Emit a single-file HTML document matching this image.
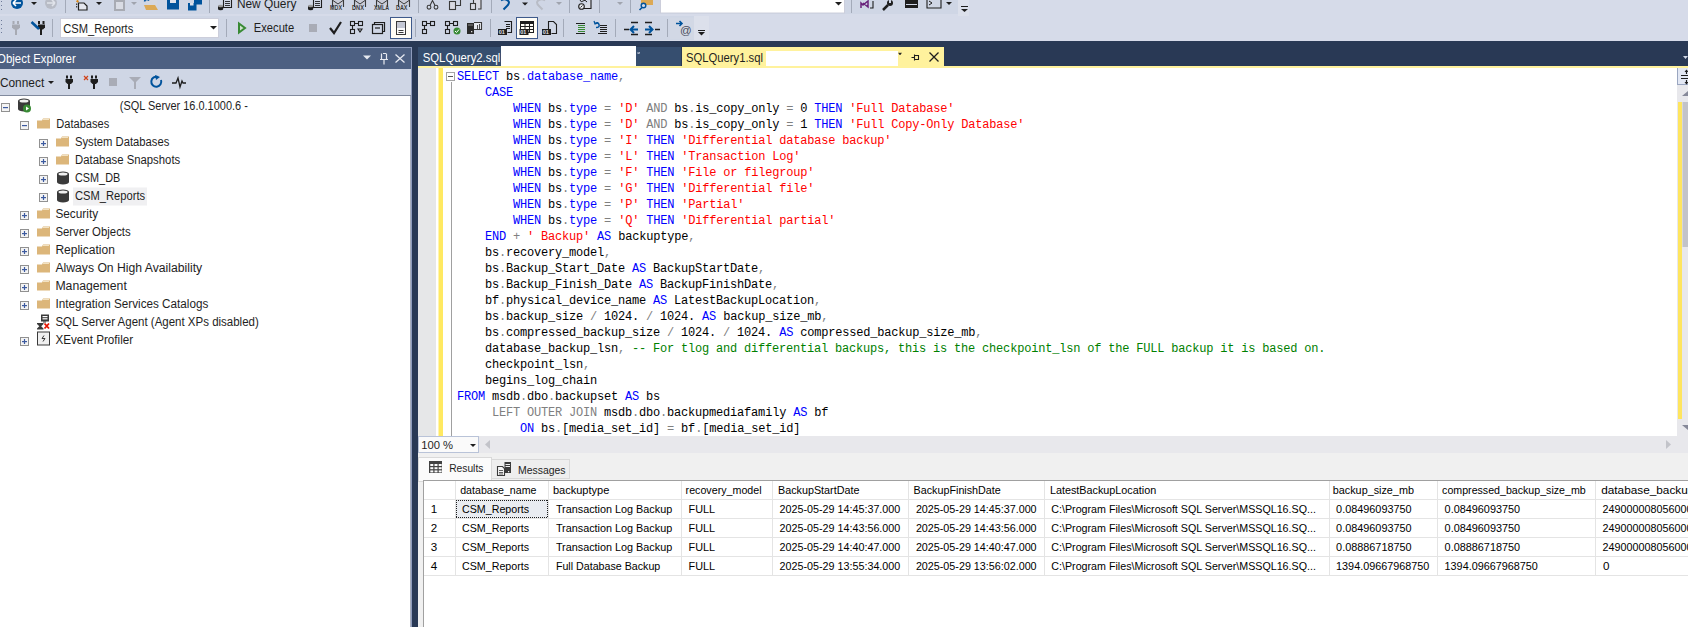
<!DOCTYPE html>
<html><head><meta charset="utf-8">
<style>
*{margin:0;padding:0;box-sizing:border-box}
html,body{width:1688px;height:627px;overflow:hidden;background:#293955;font-family:"Liberation Sans",sans-serif;position:relative}
.a{position:absolute;display:block}
svg text{white-space:pre}
#code{left:457px;top:69px;font-family:"Liberation Mono",monospace;font-size:12px;letter-spacing:-0.2px;line-height:16px;white-space:pre;color:#000}
.k{color:#0000FF}.g{color:#808080}.s{color:#FF0000}.c{color:#008000}.m{color:#FF00FF}
</style></head><body>
<svg class="a" style="left:0;top:0" width="1688" height="41" viewBox="0 0 1688 41">
<rect x="0" y="0" width="1688" height="41" fill="#D6DBE9"/>
<rect x="0" y="0" width="958" height="14" fill="#CFD6E5"/>
<rect x="0" y="16" width="694" height="24" fill="#CFD6E5"/><rect x="694" y="16" width="15" height="24" fill="#DCE0EB"/><rect x="958" y="0" width="11" height="16" fill="#DCE0EB"/>
<!-- grips -->
<g fill="#6D7A99"><rect x="1" y="1" width="1" height="1"/><rect x="1" y="5" width="1" height="1"/><rect x="1" y="9" width="1" height="1"/>
<rect x="1" y="20" width="1" height="1"/><rect x="1" y="24" width="1" height="1"/><rect x="1" y="28" width="1" height="1"/><rect x="1" y="32" width="1" height="1"/></g>
<!-- separators -->
<g fill="#A3AAB9">
<rect x="65" y="0" width="1" height="13"/><rect x="209" y="0" width="1" height="13"/><rect x="418" y="0" width="1" height="13"/><rect x="491" y="0" width="1" height="13"/><rect x="569" y="0" width="1" height="13"/><rect x="599" y="0" width="1" height="13"/><rect x="630" y="0" width="1" height="13"/><rect x="851" y="0" width="1" height="13"/>
<rect x="52" y="19" width="1" height="18"/><rect x="226" y="19" width="1" height="18"/><rect x="415" y="19" width="1" height="18"/><rect x="490" y="19" width="1" height="18"/><rect x="563" y="19" width="1" height="18"/><rect x="615" y="19" width="1" height="18"/><rect x="667" y="19" width="1" height="18"/>
</g>
<!-- row1 icons -->
<circle cx="17" cy="3" r="6" fill="#00539C"/><path d="M13 3h8M13 3l3-3M13 3l3 3" stroke="#fff" stroke-width="1.6" fill="none"/>
<path d="M31 2h6l-3 3z" fill="#1E1E1E"/>
<circle cx="51" cy="3" r="6" fill="#B8BCC6"/><path d="M47 3h8M55 3l-3-3M55 3l-3 3" stroke="#E0E3EA" stroke-width="1.6" fill="none"/>
<path d="M78.5 10V3h5.5l3 3v4z" fill="#E4E6EE" stroke="#1E1E1E" stroke-width="1.2"/><path d="M76.7 3.5v5" stroke="#1E1E1E" stroke-width="1" stroke-dasharray="1.5 1"/><path d="M77.5 0v2.5M76 1.3h3" stroke="#D98B1F" stroke-width="1.1"/>
<path d="M96 2h6l-3 3z" fill="#1E1E1E"/>
<rect x="115" y="1" width="9" height="9" fill="#D9DCE4" stroke="#A8ABB3" stroke-width="2"/>
<path d="M131 2h6l-3 3z" fill="#A0A4AE"/>
<rect x="147" y="0" width="10" height="7" fill="#D4D7E0"/><path d="M144 5h11l3 5h-12z" fill="#DCA955"/><path d="M144.5 1.5a2.5 2.5 0 0 1 4.5 -1" stroke="#00539C" stroke-width="1.5" fill="none"/>
<rect x="167" y="0" width="12" height="9.5" fill="#00539C"/><rect x="170" y="0" width="6" height="3" fill="#DDE2EC"/>
<rect x="194" y="0" width="8" height="4.5" fill="#00539C"/><rect x="188" y="3" width="8.5" height="7.5" fill="#00539C"/><rect x="190" y="3" width="3.5" height="2.5" fill="#DDE2EC"/>
<!-- new query icon -->
<path d="M223.5 -1v8.5h8v-9" stroke="#1E1E1E" stroke-width="1.1" fill="none"/><path d="M225 1.5h5M225 3.5h5M225 5.5h5" stroke="#1E1E1E" stroke-width="0.9"/><path d="M218 6v3a2.6 1.3 0 0 0 5.2 0v-3z" fill="#1E1E1E"/><ellipse cx="220.6" cy="6" rx="2.6" ry="1.2" fill="#999"/>
<path d="M313.5 -1v8.5h8v-9" stroke="#1E1E1E" stroke-width="1.1" fill="none"/><path d="M315 1.5h5M315 3.5h5M315 5.5h5" stroke="#1E1E1E" stroke-width="0.9"/><path d="M308 6v3a2.6 1.3 0 0 0 5.2 0v-3z" fill="#1E1E1E"/><ellipse cx="310.6" cy="6" rx="2.6" ry="1.2" fill="#999"/>
<rect x="333" y="-1" width="10" height="6" fill="#C9CCD8"/><path d="M332.5 7v-8M343.5 7v-8" stroke="#3A3A3A" stroke-width="1.1" fill="none"/><path d="M333 0.5l5 3.5l5 -3.5" stroke="#3A3A3A" stroke-width="1" fill="none"/><text x="330" y="10" font-family="Liberation Sans" font-size="6.5" font-weight="bold" fill="#3A3A3A" textLength="12" lengthAdjust="spacingAndGlyphs">MDX</text><rect x="355" y="-1" width="10" height="6" fill="#C9CCD8"/><path d="M354.5 7v-8M365.5 7v-8" stroke="#3A3A3A" stroke-width="1.1" fill="none"/><path d="M355 0.5l5 3.5l5 -3.5" stroke="#3A3A3A" stroke-width="1" fill="none"/><text x="352" y="10" font-family="Liberation Sans" font-size="6.5" font-weight="bold" fill="#3A3A3A" textLength="12" lengthAdjust="spacingAndGlyphs">DNX</text><rect x="377" y="-1" width="10" height="6" fill="#C9CCD8"/><path d="M376.5 7v-8M387.5 7v-8" stroke="#3A3A3A" stroke-width="1.1" fill="none"/><path d="M377 0.5l5 3.5l5 -3.5" stroke="#3A3A3A" stroke-width="1" fill="none"/><text x="374" y="10" font-family="Liberation Sans" font-size="6.5" font-weight="bold" fill="#3A3A3A" textLength="15" lengthAdjust="spacingAndGlyphs">XMLA</text><rect x="399" y="-1" width="10" height="6" fill="#C9CCD8"/><path d="M398.5 7v-8M409.5 7v-8" stroke="#3A3A3A" stroke-width="1.1" fill="none"/><path d="M399 0.5l5 3.5l5 -3.5" stroke="#3A3A3A" stroke-width="1" fill="none"/><text x="396" y="10" font-family="Liberation Sans" font-size="6.5" font-weight="bold" fill="#3A3A3A" textLength="11.5" lengthAdjust="spacingAndGlyphs">DAX</text>
<!-- cut copy paste -->
<circle cx="429" cy="7.2" r="1.9" stroke="#3A3A3A" stroke-width="1.1" fill="none"/><circle cx="436" cy="7.2" r="1.9" stroke="#3A3A3A" stroke-width="1.1" fill="none"/><path d="M430 5.5l3 -6M435 5.5l-3 -6" stroke="#3A3A3A" stroke-width="1.1"/>
<rect x="449.5" y="1.5" width="6" height="8" fill="#D9DAE3" stroke="#3A3A3A" stroke-width="1.1"/><path d="M455.5 5.5h5v-6" stroke="#3A3A3A" stroke-width="1.1" fill="none"/>
<path d="M473.5 3v-4h7.5v10h-3" stroke="#3A3A3A" stroke-width="1.1" fill="#D9DAE3"/><rect x="470.5" y="3.5" width="5" height="6" fill="#D9DAE3" stroke="#3A3A3A" stroke-width="1.1"/>
<!-- undo redo -->
<path d="M501 0.5q3 -2 6 -0.5q4 2 0 6l-3.5 3.5" stroke="#00539C" stroke-width="2" fill="none"/><path d="M522 2.5h6l-3 3z" fill="#1E1E1E"/>
<path d="M545 0.5q-3 -2 -6 -0.5q-4 2 0 6l3.5 3.5" stroke="#B8BCC6" stroke-width="2" fill="none"/><path d="M556 2h6l-3 3z" fill="#A0A4AE"/>
<path d="M583 8.5h8v-9" stroke="#1E1E1E" stroke-width="1.1" fill="#D9DCE4"/><path d="M580 0q1 3 3 1q2 -2 4 1" stroke="#1E1E1E" stroke-width="1" fill="none"/><circle cx="581.5" cy="6.5" r="2.8" stroke="#1E1E1E" stroke-width="1.1" fill="#E6E8EE"/><path d="M580.5 7.5l2 -2" stroke="#1E1E1E" stroke-width="0.9"/>
<path d="M617 2h6l-3 3z" fill="#A0A4AE"/>
<rect x="641" y="-1" width="12" height="6" fill="#DCA955"/><circle cx="643.5" cy="5.5" r="2.3" stroke="#00539C" stroke-width="1.4" fill="#D6DBE9"/><path d="M642 7.5l-2.5 2.5" stroke="#00539C" stroke-width="1.6"/>
<rect x="660.5" y="-1" width="184" height="14" fill="#fff" stroke="#CCCEDB"/><path d="M835 2h7l-3.5 3.5z" fill="#1E1E1E"/>
<path d="M863 3l5 4v-6l-5 4l-2 -2v5" stroke="#68217A" stroke-width="1.5" fill="none"/><path d="M873 1v7h-3" stroke="#1E1E1E" stroke-width="1.1" fill="none"/>
<path d="M883 10l5 -5" stroke="#1E1E1E" stroke-width="2.5"/><circle cx="890" cy="3" r="3" fill="#1E1E1E"/><rect x="889" y="-1" width="2" height="4" fill="#CFD6E5"/>
<rect x="905" y="0" width="13" height="8" fill="#1E1E1E"/><rect x="906" y="4" width="11" height="1" fill="#CFD6E5"/>
<path d="M927 0v8h14v-8" stroke="#1E1E1E" stroke-width="1.1" fill="none"/><path d="M929 1l3 2l-3 2" stroke="#1E1E1E" stroke-width="1" fill="none"/>
<path d="M946 2h6l-3 3z" fill="#1E1E1E"/>
<path d="M961 6.5h7" stroke="#1E1E1E" stroke-width="1"/><path d="M961 9h7l-3.5 3z" fill="#1E1E1E"/>
<!-- row2 icons -->
<g fill="#A7AAB3"><rect x="12.5" y="21" width="2" height="3"/><rect x="17" y="21" width="2" height="3"/><path d="M12 24.5h8v3l-2 2h-4l-2 -2z"/><rect x="15" y="29" width="2" height="6"/></g>
<g fill="#1E1E1E"><rect x="38" y="21" width="2" height="3"/><rect x="42.5" y="21" width="2" height="3"/><path d="M38 24.5h7v3l-2 2h-3l-2 -2z"/><rect x="40" y="29" width="2" height="6"/></g><path d="M31.5 22l7.5 7" stroke="#00539C" stroke-width="2.6"/>
<rect x="60.5" y="18.5" width="158" height="19" fill="#fff" stroke="#CCCEDB"/><path d="M210 26h7l-3.5 3.5z" fill="#1E1E1E"/>
<path d="M239 23.5l6 4.5l-6 4.5z" stroke="#388A34" stroke-width="2" fill="#CFE3CE"/>
<rect x="309" y="24" width="8" height="8" fill="#A9ACB6"/>
<path d="M330 28l4 5l7 -11" stroke="#1E1E1E" stroke-width="2.2" fill="none"/>
<g stroke="#1E1E1E" stroke-width="1.1" fill="none"><rect x="350.5" y="21.5" width="4" height="4"/><rect x="358.5" y="21.5" width="4" height="4"/><rect x="350.5" y="29.5" width="4" height="4"/><path d="M355 23.5h3M352.5 26v3M358 29h4l-2 3z"/></g>
<g stroke="#1E1E1E" stroke-width="1.2" fill="none"><rect x="372.5" y="24.5" width="10" height="9"/><path d="M374.5 24.5v-2h10v9h-2"/><path d="M375 28h5"/></g>
<rect x="390.5" y="17.5" width="21" height="21" fill="#FFFDF6" stroke="#3F5A8B"/>
<rect x="396.5" y="21.5" width="9" height="13" fill="#FCFCFC" stroke="#3A3A3A" stroke-width="1"/><rect x="397" y="22" width="8" height="6" fill="#C5C8D3"/><path d="M398.5 30.5h5M398.5 32.5h5" stroke="#3A3A3A" stroke-width="1"/>
<g stroke="#1E1E1E" stroke-width="1.1" fill="none"><rect x="422.5" y="21.5" width="4" height="4"/><rect x="430.5" y="21.5" width="4" height="4"/><rect x="422.5" y="29.5" width="4" height="4"/><path d="M427 23.5h3M424.5 26v3"/></g>
<g stroke="#1E1E1E" stroke-width="1.1" fill="none"><rect x="445.5" y="21.5" width="4" height="4"/><rect x="453.5" y="21.5" width="4" height="4"/><rect x="445.5" y="29.5" width="4" height="4"/><path d="M450 23.5h3M447.5 26v3"/></g><circle cx="457" cy="31" r="3.5" fill="#388A34"/><path d="M455 31l1.5 1.5l2.5 -3" stroke="#fff" stroke-width="1" fill="none"/>
<path d="M474 22.5h7.5v7h-7.5" stroke="#3A3A3A" stroke-width="1.1" fill="#E6E8EE"/><path d="M477.5 25v4M479.5 24v5" stroke="#3A3A3A" stroke-width="0.9"/><rect x="467" y="23" width="7" height="11" fill="#2A2A2A"/><rect x="468" y="24.5" width="5" height="1" fill="#888"/><rect x="471" y="31" width="1.3" height="1.3" fill="#DDD"/>
<path d="M504.5 21.5h7v11h-4" stroke="#1E1E1E" stroke-width="1.1" fill="none"/><path d="M506 24.5h4M506 26.5h4M506 28.5h4" stroke="#1E1E1E" stroke-width="1"/><rect x="498" y="29" width="9" height="6" fill="#1E1E1E"/><text x="498.8" y="34.2" font-family="Liberation Sans" font-size="5.5" font-weight="bold" fill="#E0E3EA">01</text>
<rect x="516.5" y="17.5" width="21" height="21" fill="#FFFDF6" stroke="#3F5A8B"/>
<rect x="520" y="21" width="14" height="3" fill="#1E1E1E"/><g stroke="#1E1E1E" stroke-width="1" fill="none"><rect x="520.5" y="21.5" width="13" height="11"/><path d="M520.5 26.5h13M520.5 29.5h13M525 24v8M529.5 24v8"/></g><rect x="519.5" y="29" width="9" height="6" fill="#1E1E1E"/><text x="520.3" y="34.2" font-family="Liberation Sans" font-size="5.5" font-weight="bold" fill="#E0E3EA">01</text>
<path d="M548.5 29v-7.5h5l3 3v9h-5" stroke="#1E1E1E" stroke-width="1.1" fill="none"/><rect x="542" y="29" width="9" height="6" fill="#1E1E1E"/><text x="542.8" y="34.2" font-family="Liberation Sans" font-size="5.5" font-weight="bold" fill="#E0E3EA">01</text>
<path d="M576 23.5h9M576 33.5h9" stroke="#1E1E1E" stroke-width="1"/><path d="M578 25.5h7M578 27.5h7M578 29.5h7M578 31.5h7" stroke="#388A34" stroke-width="1"/>
<path d="M595 23.5q3 -2 4 1t-3 3" stroke="#00539C" stroke-width="1.5" fill="none"/><path d="M594 21l1 3l3 -1" stroke="#00539C" stroke-width="1.2" fill="none"/><path d="M600 25.5h7M600 27.5h7M600 29.5h7M600 31.5h7M598 33.5h9" stroke="#1E1E1E" stroke-width="1"/>
<path d="M631 22.5h7M631 34.5h7M624 29.5h5" stroke="#1E1E1E" stroke-width="1.4"/><path d="M638 29.5h-7M634 26l-3.5 3.5l3.5 3.5" stroke="#00539C" stroke-width="2" fill="none"/>
<path d="M645 22.5h7M645 34.5h7M655 29.5h5" stroke="#1E1E1E" stroke-width="1.4"/><path d="M645 29.5h7M649 26l3.5 3.5l-3.5 3.5" stroke="#00539C" stroke-width="2" fill="none"/>
<rect x="670" y="17.5" width="24" height="22" fill="#D2D8E5"/>
<path d="M676 23.5h6M679.5 21l2.5 2.5l-2.5 2.5" stroke="#00539C" stroke-width="1.6" fill="none"/><text x="680" y="33.5" font-family="Liberation Sans" font-size="11.5" fill="#4A4F5C">@</text>
<path d="M698 30.5h7" stroke="#1E1E1E" stroke-width="1"/><path d="M698 32h7l-3.5 3.5z" fill="#1E1E1E"/>
<text x="236.90" y="8" font-family="Liberation Sans" font-size="12" fill="#1E1E1E" textLength="59.50" lengthAdjust="spacingAndGlyphs">New Query</text>
<text x="63.20" y="32.6" font-family="Liberation Sans" font-size="12" fill="#1E1E1E" textLength="70.10" lengthAdjust="spacingAndGlyphs">CSM_Reports</text>
<text x="253.80" y="31.5" font-family="Liberation Sans" font-size="12" fill="#1E1E1E" textLength="40.40" lengthAdjust="spacingAndGlyphs">Execute</text>
</svg>

<svg class="a" style="left:0;top:41px" width="418" height="586" viewBox="0 41 418 586">
<rect x="0" y="41" width="418" height="586" fill="#293955"/>
<rect x="0" y="47" width="412" height="580" fill="#8E9BBC"/>
<rect x="0" y="48" width="411" height="21" fill="#4D6082"/>
<rect x="0" y="69" width="411" height="26" fill="#CFD6E5"/>
<rect x="0" y="95" width="411" height="1" fill="#828B9E"/>
<rect x="0" y="96" width="410" height="531" fill="#FFFFFF"/>
<rect x="410" y="96" width="1" height="531" fill="#A9AFBD"/>
<text x="-2.90" y="62.5" font-family="Liberation Sans" font-size="12" fill="#FFFFFF" textLength="78.60" lengthAdjust="spacingAndGlyphs">Object Explorer</text>
<path d="M363 55.5h8l-4 4z" fill="#E6E9F0"/>
<path d="M381.5 53.5v6M386.5 53.5v6M380 59.5h8M384 59.5v5M383 53.5h3" stroke="#E6E9F0" stroke-width="1.2" fill="none"/>
<path d="M395.5 54.5l9 8M404.5 54.5l-9 8" stroke="#E6E9F0" stroke-width="1.3"/>
<text x="-0.10" y="87" font-family="Liberation Sans" font-size="12" fill="#1E1E1E" textLength="44.30" lengthAdjust="spacingAndGlyphs">Connect</text>
<path d="M48 81h6l-3 3z" fill="#1E1E1E"/>
<g fill="#1E1E1E"><rect x="66" y="75.5" width="2" height="3"/><rect x="70" y="75.5" width="2" height="3"/><path d="M65.5 79h7.5v3l-2 2h-3.5l-2 -2z"/><rect x="68" y="83.5" width="2" height="5.5"/></g>
<g fill="#1E1E1E"><rect x="91" y="75.5" width="2" height="3"/><rect x="95" y="75.5" width="2" height="3"/><path d="M90.5 79h7.5v3l-2 2h-3.5l-2 -2z"/><rect x="93" y="83.5" width="2" height="5.5"/></g>
<path d="M84 76l4 4M88 76l-4 4" stroke="#D0431A" stroke-width="1.2"/>
<rect x="109" y="78" width="8" height="8" fill="#A9ACB6"/>
<path d="M129 77h12l-5 5v7h-2v-7z" fill="#A9ACB6"/>
<path d="M161 80a5 5 0 1 1 -3 -3" stroke="#00539C" stroke-width="2" fill="none"/><path d="M155 75l5 2l-4 3z" fill="#00539C"/>
<path d="M172 83h4l2 -5l2 9l2 -6l1 2h3" stroke="#1E1E1E" stroke-width="1.3" fill="none"/>
<rect x="1.5" y="103.5" width="8" height="8" fill="#F4F4F4" stroke="#919191" stroke-width="1"/><rect x="3" y="107.0" width="5" height="1.2" fill="#3C5AA0"/>
<path d="M18 101.0v8a6 2.5 0 0 0 12 0v-8z" fill="#3A3A3A"/><ellipse cx="24" cy="101.0" rx="6" ry="2.5" fill="#3A3A3A"/><ellipse cx="24" cy="101.0" rx="4.5" ry="1.5" fill="#F0F0F0"/>
<circle cx="27" cy="108.5" r="4" fill="#388A34"/><path d="M26 106.5l3 2l-3 2z" fill="#fff"/>
<text x="119.80" y="109.6" font-family="Liberation Sans" font-size="12" fill="#1E1E1E" textLength="128.00" lengthAdjust="spacingAndGlyphs">(SQL Server 16.0.1000.6 -</text>
<rect x="20.5" y="121.5" width="8" height="8" fill="#F4F4F4" stroke="#919191" stroke-width="1"/><rect x="22" y="125.0" width="5" height="1.2" fill="#3C5AA0"/>
<path d="M37 120.5h5l1 -2h7v10h-13z" fill="#DCB67A"/><rect x="43" y="119.0" width="6" height="1" fill="#F2E2C2"/>
<text x="56.30" y="127.6" font-family="Liberation Sans" font-size="12" fill="#1E1E1E" textLength="52.90" lengthAdjust="spacingAndGlyphs">Databases</text>
<rect x="39.5" y="139.5" width="8" height="8" fill="#F4F4F4" stroke="#919191" stroke-width="1"/><rect x="41" y="143.0" width="5" height="1.2" fill="#3C5AA0"/><rect x="42.9" y="141.0" width="1.2" height="5" fill="#3C5AA0"/>
<path d="M56 138.5h5l1 -2h7v10h-13z" fill="#DCB67A"/><rect x="62" y="137.0" width="6" height="1" fill="#F2E2C2"/>
<text x="75.00" y="145.6" font-family="Liberation Sans" font-size="12" fill="#1E1E1E" textLength="94.30" lengthAdjust="spacingAndGlyphs">System Databases</text>
<rect x="39.5" y="157.5" width="8" height="8" fill="#F4F4F4" stroke="#919191" stroke-width="1"/><rect x="41" y="161.0" width="5" height="1.2" fill="#3C5AA0"/><rect x="42.9" y="159.0" width="1.2" height="5" fill="#3C5AA0"/>
<path d="M56 156.5h5l1 -2h7v10h-13z" fill="#DCB67A"/><rect x="62" y="155.0" width="6" height="1" fill="#F2E2C2"/>
<text x="75.00" y="163.6" font-family="Liberation Sans" font-size="12" fill="#1E1E1E" textLength="105.20" lengthAdjust="spacingAndGlyphs">Database Snapshots</text>
<rect x="39.5" y="175.5" width="8" height="8" fill="#F4F4F4" stroke="#919191" stroke-width="1"/><rect x="41" y="179.0" width="5" height="1.2" fill="#3C5AA0"/><rect x="42.9" y="177.0" width="1.2" height="5" fill="#3C5AA0"/>
<path d="M57 174.0v8a6 2.5 0 0 0 12 0v-8z" fill="#3A3A3A"/><ellipse cx="63" cy="174.0" rx="6" ry="2.5" fill="#3A3A3A"/><ellipse cx="63" cy="174.0" rx="4.5" ry="1.5" fill="#F0F0F0"/>
<text x="75.00" y="181.6" font-family="Liberation Sans" font-size="12" fill="#1E1E1E" textLength="45.20" lengthAdjust="spacingAndGlyphs">CSM_DB</text>
<rect x="39.5" y="193.5" width="8" height="8" fill="#F4F4F4" stroke="#919191" stroke-width="1"/><rect x="41" y="197.0" width="5" height="1.2" fill="#3C5AA0"/><rect x="42.9" y="195.0" width="1.2" height="5" fill="#3C5AA0"/>
<rect x="73" y="187.5" width="74" height="18" fill="#F0F0F2"/>
<path d="M57 192.0v8a6 2.5 0 0 0 12 0v-8z" fill="#3A3A3A"/><ellipse cx="63" cy="192.0" rx="6" ry="2.5" fill="#3A3A3A"/><ellipse cx="63" cy="192.0" rx="4.5" ry="1.5" fill="#F0F0F0"/>
<text x="75.00" y="199.6" font-family="Liberation Sans" font-size="12" fill="#1E1E1E" textLength="70.10" lengthAdjust="spacingAndGlyphs">CSM_Reports</text>
<rect x="20.5" y="211.5" width="8" height="8" fill="#F4F4F4" stroke="#919191" stroke-width="1"/><rect x="22" y="215.0" width="5" height="1.2" fill="#3C5AA0"/><rect x="23.9" y="213.0" width="1.2" height="5" fill="#3C5AA0"/>
<path d="M37 210.5h5l1 -2h7v10h-13z" fill="#DCB67A"/><rect x="43" y="209.0" width="6" height="1" fill="#F2E2C2"/>
<text x="55.40" y="217.6" font-family="Liberation Sans" font-size="12" fill="#1E1E1E" textLength="42.70" lengthAdjust="spacingAndGlyphs">Security</text>
<rect x="20.5" y="229.5" width="8" height="8" fill="#F4F4F4" stroke="#919191" stroke-width="1"/><rect x="22" y="233.0" width="5" height="1.2" fill="#3C5AA0"/><rect x="23.9" y="231.0" width="1.2" height="5" fill="#3C5AA0"/>
<path d="M37 228.5h5l1 -2h7v10h-13z" fill="#DCB67A"/><rect x="43" y="227.0" width="6" height="1" fill="#F2E2C2"/>
<text x="55.40" y="235.6" font-family="Liberation Sans" font-size="12" fill="#1E1E1E" textLength="75.30" lengthAdjust="spacingAndGlyphs">Server Objects</text>
<rect x="20.5" y="247.5" width="8" height="8" fill="#F4F4F4" stroke="#919191" stroke-width="1"/><rect x="22" y="251.0" width="5" height="1.2" fill="#3C5AA0"/><rect x="23.9" y="249.0" width="1.2" height="5" fill="#3C5AA0"/>
<path d="M37 246.5h5l1 -2h7v10h-13z" fill="#DCB67A"/><rect x="43" y="245.0" width="6" height="1" fill="#F2E2C2"/>
<text x="55.40" y="253.6" font-family="Liberation Sans" font-size="12" fill="#1E1E1E" textLength="59.50" lengthAdjust="spacingAndGlyphs">Replication</text>
<rect x="20.5" y="265.5" width="8" height="8" fill="#F4F4F4" stroke="#919191" stroke-width="1"/><rect x="22" y="269.0" width="5" height="1.2" fill="#3C5AA0"/><rect x="23.9" y="267.0" width="1.2" height="5" fill="#3C5AA0"/>
<path d="M37 264.5h5l1 -2h7v10h-13z" fill="#DCB67A"/><rect x="43" y="263.0" width="6" height="1" fill="#F2E2C2"/>
<text x="55.40" y="271.6" font-family="Liberation Sans" font-size="12" fill="#1E1E1E" textLength="146.80" lengthAdjust="spacingAndGlyphs">Always On High Availability</text>
<rect x="20.5" y="283.5" width="8" height="8" fill="#F4F4F4" stroke="#919191" stroke-width="1"/><rect x="22" y="287.0" width="5" height="1.2" fill="#3C5AA0"/><rect x="23.9" y="285.0" width="1.2" height="5" fill="#3C5AA0"/>
<path d="M37 282.5h5l1 -2h7v10h-13z" fill="#DCB67A"/><rect x="43" y="281.0" width="6" height="1" fill="#F2E2C2"/>
<text x="55.40" y="289.6" font-family="Liberation Sans" font-size="12" fill="#1E1E1E" textLength="71.40" lengthAdjust="spacingAndGlyphs">Management</text>
<rect x="20.5" y="301.5" width="8" height="8" fill="#F4F4F4" stroke="#919191" stroke-width="1"/><rect x="22" y="305.0" width="5" height="1.2" fill="#3C5AA0"/><rect x="23.9" y="303.0" width="1.2" height="5" fill="#3C5AA0"/>
<path d="M37 300.5h5l1 -2h7v10h-13z" fill="#DCB67A"/><rect x="43" y="299.0" width="6" height="1" fill="#F2E2C2"/>
<text x="55.40" y="307.6" font-family="Liberation Sans" font-size="12" fill="#1E1E1E" textLength="152.90" lengthAdjust="spacingAndGlyphs">Integration Services Catalogs</text>
<rect x="41" y="314.5" width="8" height="7" fill="#3A3A3A"/><rect x="42.5" y="316.0" width="5" height="1.2" fill="#fff"/><rect x="42.5" y="318.2" width="5" height="1.2" fill="#fff"/><rect x="43" y="321.5" width="3" height="1" fill="#3A3A3A"/>
<path d="M37 323.0h6.5v1l-2.3 2.3l2.3 2.3v1h-6.5v-1l2.3 -2.3l-2.3 -2.3z" fill="#3A3A3A"/>
<path d="M44.5 323.5l4.5 5M49 323.5l-4.5 5" stroke="#E51400" stroke-width="1.8"/>
<text x="55.40" y="325.6" font-family="Liberation Sans" font-size="12" fill="#1E1E1E" textLength="203.40" lengthAdjust="spacingAndGlyphs">SQL Server Agent (Agent XPs disabled)</text>
<rect x="20.5" y="337.5" width="8" height="8" fill="#F4F4F4" stroke="#919191" stroke-width="1"/><rect x="22" y="341.0" width="5" height="1.2" fill="#3C5AA0"/><rect x="23.9" y="339.0" width="1.2" height="5" fill="#3C5AA0"/>
<rect x="37.5" y="332.0" width="12" height="13" fill="#F0F0F0" stroke="#3A3A3A" stroke-width="1"/>
<path d="M44 335.5l-2 3h3l-2 3" stroke="#3A3A3A" stroke-width="1" fill="none"/>
<text x="55.40" y="343.6" font-family="Liberation Sans" font-size="12" fill="#1E1E1E" textLength="77.70" lengthAdjust="spacingAndGlyphs">XEvent Profiler</text>
</svg>
<svg class="a" style="left:418px;top:41px" width="1270" height="586" viewBox="418 41 1270 586">
<rect x="418" y="41" width="1270" height="586" fill="#293955"/>
<rect x="418" y="47" width="263" height="19" fill="#364E6F"/>
<text x="422.70" y="61.5" font-family="Liberation Sans" font-size="12" fill="#FFFFFF" textLength="77.60" lengthAdjust="spacingAndGlyphs">SQLQuery2.sql</text>
<rect x="501" y="46" width="135" height="20" fill="#FFFFFF"/>
<path d="M638.5 54l1 -2M637 53h3" stroke="#C9D1E0" stroke-width="0.8"/>
<rect x="682" y="47" width="262" height="19" fill="#FFF29D"/>
<text x="686.10" y="61.5" font-family="Liberation Sans" font-size="12" fill="#1E1E1E" textLength="76.90" lengthAdjust="spacingAndGlyphs">SQLQuery1.sql</text>
<rect x="766" y="51" width="132" height="15" fill="#FFFFFF"/>
<path d="M899 52.5l1.5 2.5M901 52.5l-1.5 2.5M898.5 53.5h3" stroke="#1E1E1E" stroke-width="0.8"/>
<path d="M911.5 57.5h3M914.5 54.5v6M914.5 55.5h4v4h-4" stroke="#1E1E1E" stroke-width="1.1" fill="none"/>
<path d="M929.5 52.5l9 9M938.5 52.5l-9 9" stroke="#1E1E1E" stroke-width="1.3"/>
<path d="M1683 56h5v0l-2.5 3z" fill="#CFD6E5"/>
<rect x="418" y="66" width="1270" height="2" fill="#FFF29D"/>
<rect x="418" y="68" width="1259" height="368" fill="#FFFFFF"/>
<rect x="418" y="68" width="18" height="368" fill="#E6E7E8"/>
<rect x="438.5" y="68" width="4.5" height="368" fill="#FFE961"/>
<rect x="446.5" y="72.5" width="8" height="8" fill="#FFFFFF" stroke="#A5A5A5"/>
<rect x="448" y="76" width="5" height="1" fill="#555555"/>
<rect x="451" y="82" width="1" height="354" fill="#A0A0A0"/>
<rect x="1677" y="68" width="11" height="368" fill="#E8E8EC"/>
<rect x="1677" y="68" width="11" height="17" fill="#E3E8F4"/>
<rect x="1677" y="68" width="1" height="17" fill="#9AA6C0"/><rect x="1677" y="84" width="11" height="1" fill="#9AA6C0"/>
<path d="M1681 75.5h7M1681 78.5h7M1686.5 70v4M1686.5 80v4" stroke="#1E1E1E" stroke-width="1.2" fill="none"/><path d="M1684.5 72l2 -2.5l2 2.5zM1684.5 82l2 2.5l2 -2.5z" fill="#1E1E1E"/>
<path d="M1682 96l6 -5v5z" fill="#868999"/>
<rect x="1678" y="102" width="4" height="317" fill="#FEE55F"/>
<rect x="1682.5" y="102" width="5.5" height="145" fill="#C2C3C9"/>
<path d="M1682 425h6v5z" fill="#868999"/>
<rect x="418" y="436" width="1259" height="17" fill="#E8E8EC"/>
<rect x="1677" y="436" width="11" height="17" fill="#E8E8EC"/>
<rect x="418.5" y="436.5" width="60" height="16" fill="#FAFAFA" stroke="#B9C3D8"/>
<text x="421.20" y="448.6" font-family="Liberation Sans" font-size="10.8" fill="#1E1E1E" textLength="31.90" lengthAdjust="spacingAndGlyphs">100 %</text>
<path d="M470 444h6l-3 3z" fill="#1E1E1E"/>
<path d="M490 440v9l-5 -4.5z" fill="#C2C3C9"/>
<path d="M1666 440v9l5 -4.5z" fill="#C2C3C9"/>
<rect x="418" y="453" width="1270" height="174" fill="#F0F0F0"/>
<rect x="491.5" y="459.5" width="78" height="19" fill="#EEEEEE" stroke="#D9D9D9"/>
<rect x="418.5" y="457.5" width="73" height="24" fill="#FBFBFB" stroke="#D9D9D9"/>
<rect x="419" y="478" width="72" height="3" fill="#FBFBFB"/>
<rect x="429" y="461" width="13" height="12" fill="#424242"/>
<rect x="430.3" y="464" width="3" height="2" fill="#FBFBFB"/>
<rect x="434.5" y="464" width="3" height="2" fill="#FBFBFB"/>
<rect x="438.7" y="464" width="3" height="2" fill="#FBFBFB"/>
<rect x="430.3" y="467.2" width="3" height="2" fill="#FBFBFB"/>
<rect x="434.5" y="467.2" width="3" height="2" fill="#FBFBFB"/>
<rect x="438.7" y="467.2" width="3" height="2" fill="#FBFBFB"/>
<rect x="430.3" y="470.4" width="3" height="2" fill="#FBFBFB"/>
<rect x="434.5" y="470.4" width="3" height="2" fill="#FBFBFB"/>
<rect x="438.7" y="470.4" width="3" height="2" fill="#FBFBFB"/>
<text x="449.20" y="471.5" font-family="Liberation Sans" font-size="11.5" fill="#1E1E1E" textLength="34.20" lengthAdjust="spacingAndGlyphs">Results</text>
<path d="M497.5 466.5h5l2 2v7h-7z" fill="#F6F6F6" stroke="#3A3A3A" stroke-width="1.1"/><path d="M499 470.5h4M499 472.5h4M499 474h4" stroke="#3A3A3A" stroke-width="0.8"/>
<rect x="504.5" y="462" width="6.5" height="11" fill="#3A3A3A"/><rect x="505.5" y="464" width="4.5" height="1" fill="#EEEEEE"/><rect x="505.5" y="466" width="4.5" height="1" fill="#EEEEEE"/><rect x="508" y="471" width="1.2" height="1.2" fill="#EEEEEE"/>
<text x="518.00" y="474" font-family="Liberation Sans" font-size="11.5" fill="#1E1E1E" textLength="47.60" lengthAdjust="spacingAndGlyphs">Messages</text>
<rect x="423" y="480" width="1265" height="147" fill="#FFFFFF"/>
<rect x="423" y="480" width="1265" height="1" fill="#A0A0A0"/>
<rect x="423" y="480" width="1" height="147" fill="#A0A0A0"/>
<rect x="455" y="481" width="1" height="95" fill="#E4E4E4"/>
<rect x="548" y="481" width="1" height="95" fill="#E4E4E4"/>
<rect x="681" y="481" width="1" height="95" fill="#E4E4E4"/>
<rect x="772" y="481" width="1" height="95" fill="#E4E4E4"/>
<rect x="908" y="481" width="1" height="95" fill="#E4E4E4"/>
<rect x="1044" y="481" width="1" height="95" fill="#E4E4E4"/>
<rect x="1329" y="481" width="1" height="95" fill="#E4E4E4"/>
<rect x="1437" y="481" width="1" height="95" fill="#E4E4E4"/>
<rect x="1595" y="481" width="1" height="95" fill="#E4E4E4"/>
<rect x="424" y="499" width="1264" height="1" fill="#E4E4E4"/>
<rect x="424" y="518" width="1264" height="1" fill="#E4E4E4"/>
<rect x="424" y="537" width="1264" height="1" fill="#E4E4E4"/>
<rect x="424" y="556" width="1264" height="1" fill="#E4E4E4"/>
<rect x="424" y="575" width="1264" height="1" fill="#E4E4E4"/>
<rect x="456" y="500" width="92" height="18" fill="#E9ECF1"/>
<g fill="#1E1E1E"><rect x="456" y="500" width="1" height="1"/><rect x="456" y="517" width="1" height="1"/><rect x="458" y="500" width="1" height="1"/><rect x="458" y="517" width="1" height="1"/><rect x="460" y="500" width="1" height="1"/><rect x="460" y="517" width="1" height="1"/><rect x="462" y="500" width="1" height="1"/><rect x="462" y="517" width="1" height="1"/><rect x="464" y="500" width="1" height="1"/><rect x="464" y="517" width="1" height="1"/><rect x="466" y="500" width="1" height="1"/><rect x="466" y="517" width="1" height="1"/><rect x="468" y="500" width="1" height="1"/><rect x="468" y="517" width="1" height="1"/><rect x="470" y="500" width="1" height="1"/><rect x="470" y="517" width="1" height="1"/><rect x="472" y="500" width="1" height="1"/><rect x="472" y="517" width="1" height="1"/><rect x="474" y="500" width="1" height="1"/><rect x="474" y="517" width="1" height="1"/><rect x="476" y="500" width="1" height="1"/><rect x="476" y="517" width="1" height="1"/><rect x="478" y="500" width="1" height="1"/><rect x="478" y="517" width="1" height="1"/><rect x="480" y="500" width="1" height="1"/><rect x="480" y="517" width="1" height="1"/><rect x="482" y="500" width="1" height="1"/><rect x="482" y="517" width="1" height="1"/><rect x="484" y="500" width="1" height="1"/><rect x="484" y="517" width="1" height="1"/><rect x="486" y="500" width="1" height="1"/><rect x="486" y="517" width="1" height="1"/><rect x="488" y="500" width="1" height="1"/><rect x="488" y="517" width="1" height="1"/><rect x="490" y="500" width="1" height="1"/><rect x="490" y="517" width="1" height="1"/><rect x="492" y="500" width="1" height="1"/><rect x="492" y="517" width="1" height="1"/><rect x="494" y="500" width="1" height="1"/><rect x="494" y="517" width="1" height="1"/><rect x="496" y="500" width="1" height="1"/><rect x="496" y="517" width="1" height="1"/><rect x="498" y="500" width="1" height="1"/><rect x="498" y="517" width="1" height="1"/><rect x="500" y="500" width="1" height="1"/><rect x="500" y="517" width="1" height="1"/><rect x="502" y="500" width="1" height="1"/><rect x="502" y="517" width="1" height="1"/><rect x="504" y="500" width="1" height="1"/><rect x="504" y="517" width="1" height="1"/><rect x="506" y="500" width="1" height="1"/><rect x="506" y="517" width="1" height="1"/><rect x="508" y="500" width="1" height="1"/><rect x="508" y="517" width="1" height="1"/><rect x="510" y="500" width="1" height="1"/><rect x="510" y="517" width="1" height="1"/><rect x="512" y="500" width="1" height="1"/><rect x="512" y="517" width="1" height="1"/><rect x="514" y="500" width="1" height="1"/><rect x="514" y="517" width="1" height="1"/><rect x="516" y="500" width="1" height="1"/><rect x="516" y="517" width="1" height="1"/><rect x="518" y="500" width="1" height="1"/><rect x="518" y="517" width="1" height="1"/><rect x="520" y="500" width="1" height="1"/><rect x="520" y="517" width="1" height="1"/><rect x="522" y="500" width="1" height="1"/><rect x="522" y="517" width="1" height="1"/><rect x="524" y="500" width="1" height="1"/><rect x="524" y="517" width="1" height="1"/><rect x="526" y="500" width="1" height="1"/><rect x="526" y="517" width="1" height="1"/><rect x="528" y="500" width="1" height="1"/><rect x="528" y="517" width="1" height="1"/><rect x="530" y="500" width="1" height="1"/><rect x="530" y="517" width="1" height="1"/><rect x="532" y="500" width="1" height="1"/><rect x="532" y="517" width="1" height="1"/><rect x="534" y="500" width="1" height="1"/><rect x="534" y="517" width="1" height="1"/><rect x="536" y="500" width="1" height="1"/><rect x="536" y="517" width="1" height="1"/><rect x="538" y="500" width="1" height="1"/><rect x="538" y="517" width="1" height="1"/><rect x="540" y="500" width="1" height="1"/><rect x="540" y="517" width="1" height="1"/><rect x="542" y="500" width="1" height="1"/><rect x="542" y="517" width="1" height="1"/><rect x="544" y="500" width="1" height="1"/><rect x="544" y="517" width="1" height="1"/><rect x="546" y="500" width="1" height="1"/><rect x="546" y="517" width="1" height="1"/><rect x="456" y="500" width="1" height="1"/><rect x="547" y="500" width="1" height="1"/><rect x="456" y="502" width="1" height="1"/><rect x="547" y="502" width="1" height="1"/><rect x="456" y="504" width="1" height="1"/><rect x="547" y="504" width="1" height="1"/><rect x="456" y="506" width="1" height="1"/><rect x="547" y="506" width="1" height="1"/><rect x="456" y="508" width="1" height="1"/><rect x="547" y="508" width="1" height="1"/><rect x="456" y="510" width="1" height="1"/><rect x="547" y="510" width="1" height="1"/><rect x="456" y="512" width="1" height="1"/><rect x="547" y="512" width="1" height="1"/><rect x="456" y="514" width="1" height="1"/><rect x="547" y="514" width="1" height="1"/><rect x="456" y="516" width="1" height="1"/><rect x="547" y="516" width="1" height="1"/></g>
<text x="460.20" y="493.8" font-family="Liberation Sans" font-size="11.8" fill="#000000" textLength="76.30" lengthAdjust="spacingAndGlyphs">database_name</text>
<text x="552.90" y="493.8" font-family="Liberation Sans" font-size="11.8" fill="#000000" textLength="56.50" lengthAdjust="spacingAndGlyphs">backuptype</text>
<text x="685.60" y="493.8" font-family="Liberation Sans" font-size="11.8" fill="#000000" textLength="76.00" lengthAdjust="spacingAndGlyphs">recovery_model</text>
<text x="778.00" y="493.8" font-family="Liberation Sans" font-size="11.8" fill="#000000" textLength="81.40" lengthAdjust="spacingAndGlyphs">BackupStartDate</text>
<text x="913.60" y="493.8" font-family="Liberation Sans" font-size="11.8" fill="#000000" textLength="87.20" lengthAdjust="spacingAndGlyphs">BackupFinishDate</text>
<text x="1049.90" y="493.8" font-family="Liberation Sans" font-size="11.8" fill="#000000" textLength="106.30" lengthAdjust="spacingAndGlyphs">LatestBackupLocation</text>
<text x="1332.80" y="493.8" font-family="Liberation Sans" font-size="11.8" fill="#000000" textLength="81.10" lengthAdjust="spacingAndGlyphs">backup_size_mb</text>
<text x="1442.10" y="493.8" font-family="Liberation Sans" font-size="11.8" fill="#000000" textLength="143.60" lengthAdjust="spacingAndGlyphs">compressed_backup_size_mb</text>
<text x="1601.2" y="493.8" font-family="Liberation Sans" font-size="11.8" fill="#000000">database_backup_lsn</text>
<text x="430.8" y="513" font-family="Liberation Sans" font-size="11.6" fill="#000000">1</text>
<text x="462.00" y="513" font-family="Liberation Sans" font-size="11.6" fill="#000000" textLength="67.10" lengthAdjust="spacingAndGlyphs">CSM_Reports</text>
<text x="555.90" y="513" font-family="Liberation Sans" font-size="11.6" fill="#000000" textLength="116.30" lengthAdjust="spacingAndGlyphs">Transaction Log Backup</text>
<text x="688.60" y="513" font-family="Liberation Sans" font-size="11.6" fill="#000000" textLength="26.50" lengthAdjust="spacingAndGlyphs">FULL</text>
<text x="779.60" y="513" font-family="Liberation Sans" font-size="11.6" fill="#000000" textLength="120.70" lengthAdjust="spacingAndGlyphs">2025-05-29 14:45:37.000</text>
<text x="915.90" y="513" font-family="Liberation Sans" font-size="11.6" fill="#000000" textLength="120.70" lengthAdjust="spacingAndGlyphs">2025-05-29 14:45:37.000</text>
<text x="1051.30" y="513" font-family="Liberation Sans" font-size="11.6" fill="#000000" textLength="264.60" lengthAdjust="spacingAndGlyphs">C:\Program Files\Microsoft SQL Server\MSSQL16.SQ...</text>
<text x="1336.10" y="513" font-family="Liberation Sans" font-size="11.6" fill="#000000" textLength="75.50" lengthAdjust="spacingAndGlyphs">0.08496093750</text>
<text x="1444.60" y="513" font-family="Liberation Sans" font-size="11.6" fill="#000000" textLength="75.50" lengthAdjust="spacingAndGlyphs">0.08496093750</text>
<text x="1602.60" y="513" font-family="Liberation Sans" font-size="11.6" fill="#000000" textLength="101.80" lengthAdjust="spacingAndGlyphs">24900000805600001</text>
<text x="430.8" y="532" font-family="Liberation Sans" font-size="11.6" fill="#000000">2</text>
<text x="462.00" y="532" font-family="Liberation Sans" font-size="11.6" fill="#000000" textLength="67.10" lengthAdjust="spacingAndGlyphs">CSM_Reports</text>
<text x="555.90" y="532" font-family="Liberation Sans" font-size="11.6" fill="#000000" textLength="116.30" lengthAdjust="spacingAndGlyphs">Transaction Log Backup</text>
<text x="688.60" y="532" font-family="Liberation Sans" font-size="11.6" fill="#000000" textLength="26.50" lengthAdjust="spacingAndGlyphs">FULL</text>
<text x="779.60" y="532" font-family="Liberation Sans" font-size="11.6" fill="#000000" textLength="120.70" lengthAdjust="spacingAndGlyphs">2025-05-29 14:43:56.000</text>
<text x="915.90" y="532" font-family="Liberation Sans" font-size="11.6" fill="#000000" textLength="120.70" lengthAdjust="spacingAndGlyphs">2025-05-29 14:43:56.000</text>
<text x="1051.30" y="532" font-family="Liberation Sans" font-size="11.6" fill="#000000" textLength="264.60" lengthAdjust="spacingAndGlyphs">C:\Program Files\Microsoft SQL Server\MSSQL16.SQ...</text>
<text x="1336.10" y="532" font-family="Liberation Sans" font-size="11.6" fill="#000000" textLength="75.50" lengthAdjust="spacingAndGlyphs">0.08496093750</text>
<text x="1444.60" y="532" font-family="Liberation Sans" font-size="11.6" fill="#000000" textLength="75.50" lengthAdjust="spacingAndGlyphs">0.08496093750</text>
<text x="1602.60" y="532" font-family="Liberation Sans" font-size="11.6" fill="#000000" textLength="101.80" lengthAdjust="spacingAndGlyphs">24900000805600001</text>
<text x="430.8" y="551" font-family="Liberation Sans" font-size="11.6" fill="#000000">3</text>
<text x="462.00" y="551" font-family="Liberation Sans" font-size="11.6" fill="#000000" textLength="67.10" lengthAdjust="spacingAndGlyphs">CSM_Reports</text>
<text x="555.90" y="551" font-family="Liberation Sans" font-size="11.6" fill="#000000" textLength="116.30" lengthAdjust="spacingAndGlyphs">Transaction Log Backup</text>
<text x="688.60" y="551" font-family="Liberation Sans" font-size="11.6" fill="#000000" textLength="26.50" lengthAdjust="spacingAndGlyphs">FULL</text>
<text x="779.60" y="551" font-family="Liberation Sans" font-size="11.6" fill="#000000" textLength="120.70" lengthAdjust="spacingAndGlyphs">2025-05-29 14:40:47.000</text>
<text x="915.90" y="551" font-family="Liberation Sans" font-size="11.6" fill="#000000" textLength="120.70" lengthAdjust="spacingAndGlyphs">2025-05-29 14:40:47.000</text>
<text x="1051.30" y="551" font-family="Liberation Sans" font-size="11.6" fill="#000000" textLength="264.60" lengthAdjust="spacingAndGlyphs">C:\Program Files\Microsoft SQL Server\MSSQL16.SQ...</text>
<text x="1336.10" y="551" font-family="Liberation Sans" font-size="11.6" fill="#000000" textLength="75.50" lengthAdjust="spacingAndGlyphs">0.08886718750</text>
<text x="1444.60" y="551" font-family="Liberation Sans" font-size="11.6" fill="#000000" textLength="75.50" lengthAdjust="spacingAndGlyphs">0.08886718750</text>
<text x="1602.60" y="551" font-family="Liberation Sans" font-size="11.6" fill="#000000" textLength="101.80" lengthAdjust="spacingAndGlyphs">24900000805600001</text>
<text x="430.8" y="570" font-family="Liberation Sans" font-size="11.6" fill="#000000">4</text>
<text x="462.00" y="570" font-family="Liberation Sans" font-size="11.6" fill="#000000" textLength="67.10" lengthAdjust="spacingAndGlyphs">CSM_Reports</text>
<text x="555.90" y="570" font-family="Liberation Sans" font-size="11.6" fill="#000000" textLength="104.40" lengthAdjust="spacingAndGlyphs">Full Database Backup</text>
<text x="688.60" y="570" font-family="Liberation Sans" font-size="11.6" fill="#000000" textLength="26.50" lengthAdjust="spacingAndGlyphs">FULL</text>
<text x="779.60" y="570" font-family="Liberation Sans" font-size="11.6" fill="#000000" textLength="120.70" lengthAdjust="spacingAndGlyphs">2025-05-29 13:55:34.000</text>
<text x="915.90" y="570" font-family="Liberation Sans" font-size="11.6" fill="#000000" textLength="120.70" lengthAdjust="spacingAndGlyphs">2025-05-29 13:56:02.000</text>
<text x="1051.30" y="570" font-family="Liberation Sans" font-size="11.6" fill="#000000" textLength="264.60" lengthAdjust="spacingAndGlyphs">C:\Program Files\Microsoft SQL Server\MSSQL16.SQ...</text>
<text x="1336.10" y="570" font-family="Liberation Sans" font-size="11.6" fill="#000000" textLength="93.20" lengthAdjust="spacingAndGlyphs">1394.09667968750</text>
<text x="1444.60" y="570" font-family="Liberation Sans" font-size="11.6" fill="#000000" textLength="93.20" lengthAdjust="spacingAndGlyphs">1394.09667968750</text>
<text x="1603" y="570" font-family="Liberation Sans" font-size="11.6" fill="#000000">0</text>
</svg>
<div class="a" id="code"><span class="k">SELECT</span> bs<span class="g">.</span><span class="k">database_name</span><span class="g">,</span>
    <span class="k">CASE</span>
        <span class="k">WHEN</span> bs<span class="g">.</span><span class="k">type</span> <span class="g">=</span> <span class="s">'D'</span> <span class="g">AND</span> bs<span class="g">.</span>is_copy_only <span class="g">=</span> 0 <span class="k">THEN</span> <span class="s">'Full Database'</span>
        <span class="k">WHEN</span> bs<span class="g">.</span><span class="k">type</span> <span class="g">=</span> <span class="s">'D'</span> <span class="g">AND</span> bs<span class="g">.</span>is_copy_only <span class="g">=</span> 1 <span class="k">THEN</span> <span class="s">'Full Copy-Only Database'</span>
        <span class="k">WHEN</span> bs<span class="g">.</span><span class="k">type</span> <span class="g">=</span> <span class="s">'I'</span> <span class="k">THEN</span> <span class="s">'Differential database backup'</span>
        <span class="k">WHEN</span> bs<span class="g">.</span><span class="k">type</span> <span class="g">=</span> <span class="s">'L'</span> <span class="k">THEN</span> <span class="s">'Transaction Log'</span>
        <span class="k">WHEN</span> bs<span class="g">.</span><span class="k">type</span> <span class="g">=</span> <span class="s">'F'</span> <span class="k">THEN</span> <span class="s">'File or filegroup'</span>
        <span class="k">WHEN</span> bs<span class="g">.</span><span class="k">type</span> <span class="g">=</span> <span class="s">'G'</span> <span class="k">THEN</span> <span class="s">'Differential file'</span>
        <span class="k">WHEN</span> bs<span class="g">.</span><span class="k">type</span> <span class="g">=</span> <span class="s">'P'</span> <span class="k">THEN</span> <span class="s">'Partial'</span>
        <span class="k">WHEN</span> bs<span class="g">.</span><span class="k">type</span> <span class="g">=</span> <span class="s">'Q'</span> <span class="k">THEN</span> <span class="s">'Differential partial'</span>
    <span class="k">END</span> <span class="g">+</span> <span class="s">' Backup'</span> <span class="k">AS</span> backuptype<span class="g">,</span>
    bs<span class="g">.</span>recovery_model<span class="g">,</span>
    bs<span class="g">.</span>Backup_Start_Date <span class="k">AS</span> BackupStartDate<span class="g">,</span>
    bs<span class="g">.</span>Backup_Finish_Date <span class="k">AS</span> BackupFinishDate<span class="g">,</span>
    bf<span class="g">.</span>physical_device_name <span class="k">AS</span> LatestBackupLocation<span class="g">,</span>
    bs<span class="g">.</span>backup_size <span class="g">/</span> 1024. <span class="g">/</span> 1024. <span class="k">AS</span> backup_size_mb<span class="g">,</span>
    bs<span class="g">.</span>compressed_backup_size <span class="g">/</span> 1024. <span class="g">/</span> 1024. <span class="k">AS</span> compressed_backup_size_mb<span class="g">,</span>
    database_backup_lsn<span class="g">,</span> <span class="c">-- For tlog and differential backups, this is the checkpoint_lsn of the FULL backup it is based on.</span>
    checkpoint_lsn<span class="g">,</span>
    begins_log_chain
<span class="k">FROM</span> msdb<span class="g">.</span>dbo<span class="g">.</span>backupset <span class="k">AS</span> bs
     <span class="g">LEFT OUTER JOIN</span> msdb<span class="g">.</span>dbo<span class="g">.</span>backupmediafamily <span class="k">AS</span> bf
         <span class="k">ON</span> bs<span class="g">.</span>[media_set_id] <span class="g">=</span> bf<span class="g">.</span>[media_set_id]</div>
</body></html>
